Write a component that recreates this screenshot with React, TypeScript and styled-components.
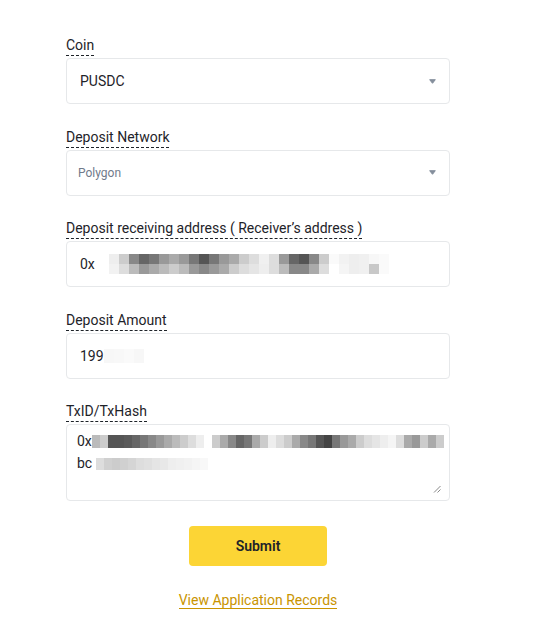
import React from "react";
import styled, { createGlobalStyle } from "styled-components";

const Global = createGlobalStyle`
  html, body { margin: 0; padding: 0; background: #fff; }
  body { font-family: Roboto, "Liberation Sans", Arial, sans-serif; color: #1e2329; }
`;

const Page = styled.div`
  padding: 36px 0 0 66px;
`;

const Form = styled.div`
  width: 384px;
  display: flex;
  flex-direction: column;
  gap: 23.5px;
`;

const Field = styled.div`
  display: flex;
  flex-direction: column;
  align-items: flex-start;
  gap: 2px;
`;

const Label = styled.span`
  display: inline-block;
  font-size: 14px;
  line-height: 19px;
  color: #1e2329;
  border-bottom: 1px dashed #1e2329;
`;

const Box = styled.div<{ $tall?: boolean }>`
  box-sizing: border-box;
  width: 384px;
  height: ${(p) => (p.$tall ? "77px" : "46px")};
  border: 1px solid #e6e8ea;
  border-radius: 4px;
  position: relative;
  display: flex;
  align-items: ${(p) => (p.$tall ? "flex-start" : "center")};
  padding: ${(p) => (p.$tall ? "9px 10px" : "0 13px")};
`;

const Value = styled.span<{ $muted?: boolean }>`
  font-size: ${(p) => (p.$muted ? "12px" : "14px")};
  color: ${(p) => (p.$muted ? "#707a8a" : "#1e2329")};
  flex: 1;
  display: flex;
  align-items: center;
`;

const Caret = styled.svg`
  width: 7px;
  height: 5px;
`;

const Grip = styled.svg`
  position: absolute;
  right: 8px;
  bottom: 7px;
  width: 8px;
  height: 8px;
`;

const HashLines = styled.div`
  display: flex;
  flex-direction: column;
  gap: 7px;
  font-size: 14px;
  line-height: 15px;
`;

const HashLine = styled.div`
  display: flex;
  align-items: center;
`;

const Actions = styled.div`
  display: flex;
  flex-direction: column;
  align-items: center;
  gap: 26px;
  margin-top: 1.5px;
`;

const SubmitButton = styled.button`
  width: 138px;
  height: 40px;
  border: none;
  border-radius: 4px;
  background: #fcd535;
  color: #1e2329;
  font-family: inherit;
  font-size: 14px;
  font-weight: 600;
  cursor: pointer;
`;

const RecordsLink = styled.a`
  font-size: 14px;
  line-height: 16px;
  color: #c99400;
  text-decoration: none;
  border-bottom: 1px solid #c99400;
  cursor: pointer;
`;

const MosaicSvg = styled.svg`
  display: block;
  flex-shrink: 0;
`;

function Mosaic({ rows, cw, ch, ml }: { rows: string[][]; cw: number; ch: number; ml?: number }) {
  const w = Math.max(...rows.map((r) => r.length)) * cw;
  const h = rows.length * ch;
  return (
    <MosaicSvg width={w} height={h} style={{ marginLeft: ml ?? 0 }}>
      {rows.map((r, i) =>
        r.map((c, j) => <rect key={`${i}-${j}`} x={j * cw} y={i * ch} width={cw} height={ch} fill={c} />)
      )}
    </MosaicSvg>
  );
}

const addrRows = [
  ["#eeeeee", "#cccccc", "#888888", "#666666", "#777777", "#999999", "#aaaaaa", "#999999", "#777777", "#555555", "#777777", "#999999", "#aaaaaa", "#cccccc", "#dddddd", "#f0f0f0", "#dddddd", "#999999", "#666666", "#555555", "#888888", "#cccccc", "#fafafa", "#f2f2f2", "#eeeeee", "#f0f0f0", "#f7f7f7", "#fafafa"],
  ["#f2f2f2", "#dddddd", "#bbbbbb", "#999999", "#aaaaaa", "#bbbbbb", "#cccccc", "#bbbbbb", "#999999", "#888888", "#999999", "#aaaaaa", "#cccccc", "#dddddd", "#e5e5e5", "#eeeeee", "#dddddd", "#bbbbbb", "#888888", "#888888", "#aaaaaa", "#dddddd", "#ffffff", "#f5f5f5", "#eeeeee", "#f0f0f0", "#c8c8c8", "#fafafa"],
];

const hashRow1 = [
  ["#bbbbbb", "#cccccc", "#555555", "#555555", "#5a5a5a", "#666666", "#777777", "#888888", "#999999", "#aaaaaa", "#bbbbbb", "#cccccc", "#dddddd", "#eeeeee", "#ffffff", "#cccccc", "#aaaaaa", "#888888", "#666666", "#777777", "#aaaaaa", "#cccccc", "#eeeeee", "#dddddd", "#cccccc", "#aaaaaa", "#888888", "#777777", "#555555", "#444444", "#777777", "#999999", "#aaaaaa", "#cccccc", "#dddddd", "#e5e5e5", "#eeeeee", "#f5f5f5", "#dddddd", "#aaaaaa", "#999999", "#cccccc", "#aaaaaa", "#cccccc"],
];

const hashRow2 = [
  ["#dddddd", "#d0d0d0", "#cccccc", "#d0d0d0", "#d5d5d5", "#dddddd", "#e0e0e0", "#e5e5e5", "#e8e8e8", "#eeeeee", "#f0f0f0", "#f2f2f2", "#f5f5f5", "#f8f8f8"],
];

const amountRows = [["#f7f7f7", "#f8f8f8", "#fafafa", "#f7f7f7"]];

function SelectCaret() {
  return (
    <Caret viewBox="0 0 7 5">
      <path d="M0.7 0.7 H6.3 L3.5 4.3 Z" fill="#848e9c" stroke="#848e9c" strokeLinejoin="round" strokeWidth="1" />
    </Caret>
  );
}

export default function App() {
  return (
    <>
      <Global />
      <Page>
        <Form>
          <Field>
            <Label>Coin</Label>
            <Box>
              <Value>PUSDC</Value>
              <SelectCaret />
            </Box>
          </Field>
          <Field>
            <Label>Deposit Network</Label>
            <Box>
              <Value $muted style={{ marginLeft: -2 }}>Polygon</Value>
              <SelectCaret />
            </Box>
          </Field>
          <Field>
            <Label>Deposit receiving address ( Receiver’s address )</Label>
            <Box>
              <Value>
                0x
                <Mosaic rows={addrRows} cw={10} ch={10} ml={14} />
              </Value>
            </Box>
          </Field>
          <Field>
            <Label>Deposit Amount</Label>
            <Box>
              <Value>
                199
                <Mosaic rows={amountRows} cw={10} ch={14} />
              </Value>
            </Box>
          </Field>
          <Field>
            <Label>TxID/TxHash</Label>
            <Box $tall>
              <HashLines>
                <HashLine>
                  0x
                  <Mosaic rows={hashRow1} cw={8} ch={13} />
                </HashLine>
                <HashLine>
                  bc
                  <Mosaic rows={hashRow2} cw={8} ch={12} ml={4} />
                </HashLine>
              </HashLines>
              <Grip viewBox="0 0 8 8">
                <path d="M1 7.5 L7.5 1 M4.5 7.5 L7.5 4.5" stroke="#888" strokeWidth="1" />
              </Grip>
            </Box>
          </Field>
          <Actions>
            <SubmitButton>Submit</SubmitButton>
            <RecordsLink>View Application Records</RecordsLink>
          </Actions>
        </Form>
      </Page>
    </>
  );
}
